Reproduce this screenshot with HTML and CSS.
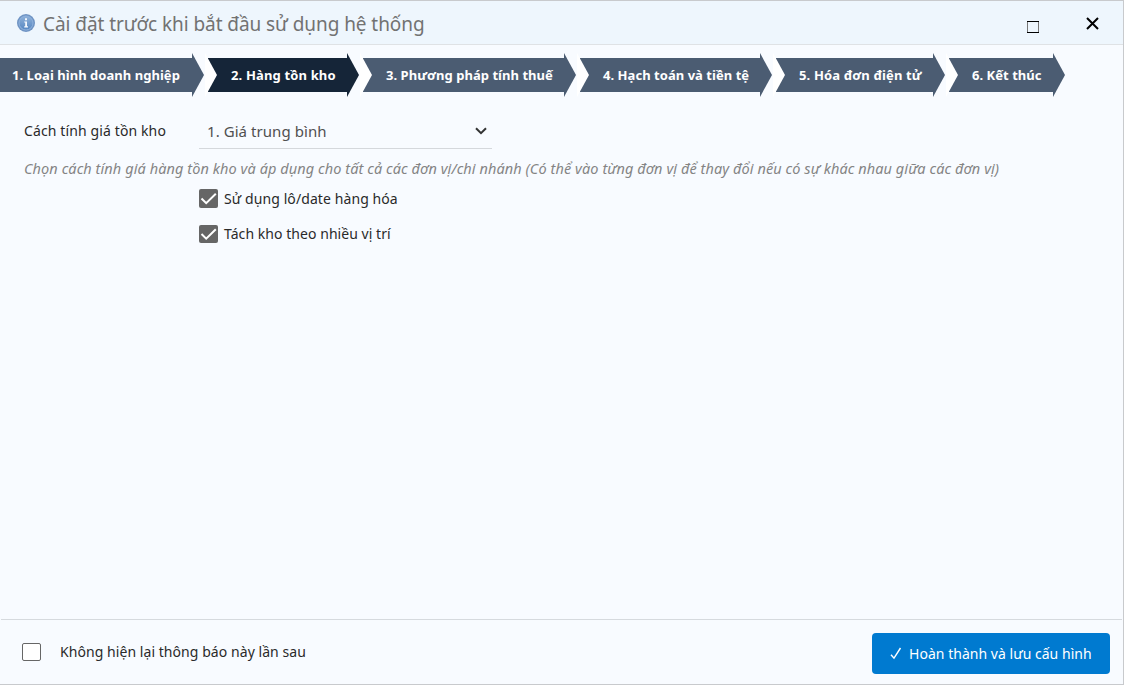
FILE: index.html
```html
<!DOCTYPE html>
<html lang="vi">
<head>
<meta charset="utf-8">
<title>Cài đặt trước khi bắt đầu sử dụng hệ thống</title>
<link rel="stylesheet" href="styles.css">
</head>
<body>
<div class="dialog">
  <header class="titlebar">
    <svg class="info" width="20" height="20" viewBox="0 0 20 20">
      <defs><linearGradient id="g" x1="0" y1="0" x2="0" y2="1"><stop offset="0" stop-color="#8fb1d9"/><stop offset="1" stop-color="#5687c2"/></linearGradient></defs>
      <circle cx="10" cy="10" r="9" fill="#6f94c4"/>
      <circle cx="10" cy="10" r="7" fill="url(#g)" stroke="#8fb3de" stroke-width="1"/>
      <path d="M9 5.2h2v2H9zM8.2 8.4H11v4.8h1v1.2H8.2v-1.2h1V9.6h-1z" fill="#f4f8fd"/>
    </svg>
    <h1 class="title">Cài đặt trước khi bắt đầu sử dụng hệ thống</h1>
    <svg class="maximize" width="13" height="13" viewBox="0 0 13 13"><path d="M1.5 0v12M12.5 0v12" stroke="#777" fill="none"/><path d="M1 .5h12M1 11.5h12" fill="none" stroke="#000"/></svg>
    <svg class="close" width="13" height="13" viewBox="0 0 13 13"><path d="M1 1l11 11M12 1L1 12" fill="none" stroke="#000" stroke-width="2"/></svg>
  </header>
  <nav class="steps">
    <div class="step s1"><span>1. Loại hình doanh nghiệp</span></div>
    <div class="step s2 active"><span>2. Hàng tồn kho</span></div>
    <div class="step s3"><span>3. Phương pháp tính thuế</span></div>
    <div class="step s4"><span>4. Hạch toán và tiền tệ</span></div>
    <div class="step s5"><span>5. Hóa đơn điện tử</span></div>
    <div class="step s6"><span>6. Kết thúc</span></div>
  </nav>
  <main class="content">
    <div class="field">
      <span class="label">Cách tính giá tồn kho</span>
      <div class="select"><span class="value">1. Giá trung bình</span>
        <svg class="chevron" width="12" height="8" viewBox="0 0 12 8"><path d="M1 1.2l5 5 5-5" fill="none" stroke="#333" stroke-width="2"/></svg>
      </div>
    </div>
    <p class="hint">Chọn cách tính giá hàng tồn kho và áp dụng cho tất cả các đơn vị/chi nhánh (Có thể vào từng đơn vị để thay đổi nếu có sự khác nhau giữa các đơn vị)</p>
    <div class="option">
      <svg class="check" width="19" height="19" viewBox="0 0 19 19"><rect width="19" height="19" rx="2" fill="#666"/><path d="M2.5 9.5l4.7 4.7L16.8 4.7" fill="none" stroke="#fff" stroke-width="2"/></svg>
      <span>Sử dụng lô/date hàng hóa</span>
    </div>
    <div class="option second">
      <svg class="check" width="19" height="20" viewBox="0 0 19 20"><rect y="2" width="19" height="18" rx="2" fill="#666"/><path d="M2.5 11l4.7 4.7L16.8 6.2" fill="none" stroke="#fff" stroke-width="2"/></svg>
      <span>Tách kho theo nhiều vị trí</span>
    </div>
  </main>
  <footer class="footer">
    <span class="box"></span>
    <span class="again">Không hiện lại thông báo này lần sau</span>
    <button class="save"><svg width="12" height="13" viewBox="0 0 12 13"><path d="M1 7.7l3 3.5L10.5 1" fill="none" stroke="#fff" stroke-width="1.4"/></svg><span>Hoàn thành và lưu cấu hình</span></button>
  </footer>
</div>
</body>
</html>
```
FILE: styles.css
```css
* { box-sizing: border-box; }
body { margin: 0; font-family: "Noto Sans", "Open Sans", sans-serif; font-size: 14px; color: #2a2a2a; }
.dialog { width: 1124px; height: 685px; display: flex; flex-direction: column; background: #f8fbff; border: 1px solid #c8cacd; border-left: 0; }
.titlebar { height: 44px; flex: none; display: flex; align-items: center; padding-left: 16px; background: #eef6fd; border-bottom: 1px solid #dfe2e5; }
.info { flex: none; }
.title { margin: 2px 0 0 7px; width: 983px; font-size: 19px; font-weight: 400; letter-spacing: -0.07px; color: #727272; white-space: nowrap; }
.maximize { flex: none; margin: 9px 0 0; }
.close { flex: none; margin: 1px 0 0 47px; }
.steps { display: flex; gap: 4px; margin-top: 13px; height: 34px; flex: none; }
.step { position: relative; display: flex; align-items: center; padding-left: 23px; margin-right: 12px; background: #4b5c72; color: #fff; font-size: 13px; font-weight: 700; letter-spacing: 0.04px; white-space: nowrap; }
.step::after { content: ""; position: absolute; left: 100%; top: -5px; width: 12px; height: 44px; background: inherit; clip-path: polygon(0 0, 100% 50%, 0 100%); }
.step + .step::before { content: ""; position: absolute; left: -3px; top: -5px; width: 12px; height: 44px; background: #fff; clip-path: polygon(0 0, 100% 50%, 0 100%); }
.active { background: #152538; }
.s1 { width: 192px; padding-left: 12px; }
.s2 { width: 139px; letter-spacing: 0.15px; }
.s3 { width: 201px; }
.s4 { width: 180px; }
.s5 { width: 157px; letter-spacing: 0.15px; }
.s6 { width: 104px; }
.content { flex: 1; padding: 23px 24px 0; white-space: nowrap; }
.field { display: flex; height: 34px; }
.label { width: 175px; line-height: 32px; letter-spacing: 0.12px; }
.select { width: 293px; height: 34px; display: flex; align-items: center; justify-content: space-between; padding: 0 5px 0 8px; border-bottom: 1px solid #d5d8dc; color: #505050; }
.value { margin-bottom: 2px; font-size: 15px; letter-spacing: 0.06px; }
.chevron { margin-bottom: 2px; }
.hint { margin: 9px 0 10px; line-height: 20px; font-size: 14.5px; letter-spacing: 0.085px; font-style: italic; color: #848484; }
.option { display: flex; align-items: center; height: 20px; margin: 0 0 15px 175px; gap: 6px; letter-spacing: 0.09px; }
.second { letter-spacing: 0.05px; }
.footer { height: 65px; flex: none; display: flex; align-items: center; padding: 3px 12px 0 21px; margin: 0 1px; border-top: 1px solid #d6dade; }
.box { width: 19px; height: 18px; margin-bottom: 4px; border: 1px solid #666; border-radius: 2px; background: #fff; }
.again { margin: 0 0 5px 19px; letter-spacing: 0.06px; }
.save { margin-left: auto; width: 238px; height: 41px; display: flex; align-items: center; padding: 0 0 0 18px; gap: 7px; border: 0; border-radius: 4px; background: #007ad0; color: #fff; font: inherit; letter-spacing: 0.03px; white-space: nowrap; }
```
